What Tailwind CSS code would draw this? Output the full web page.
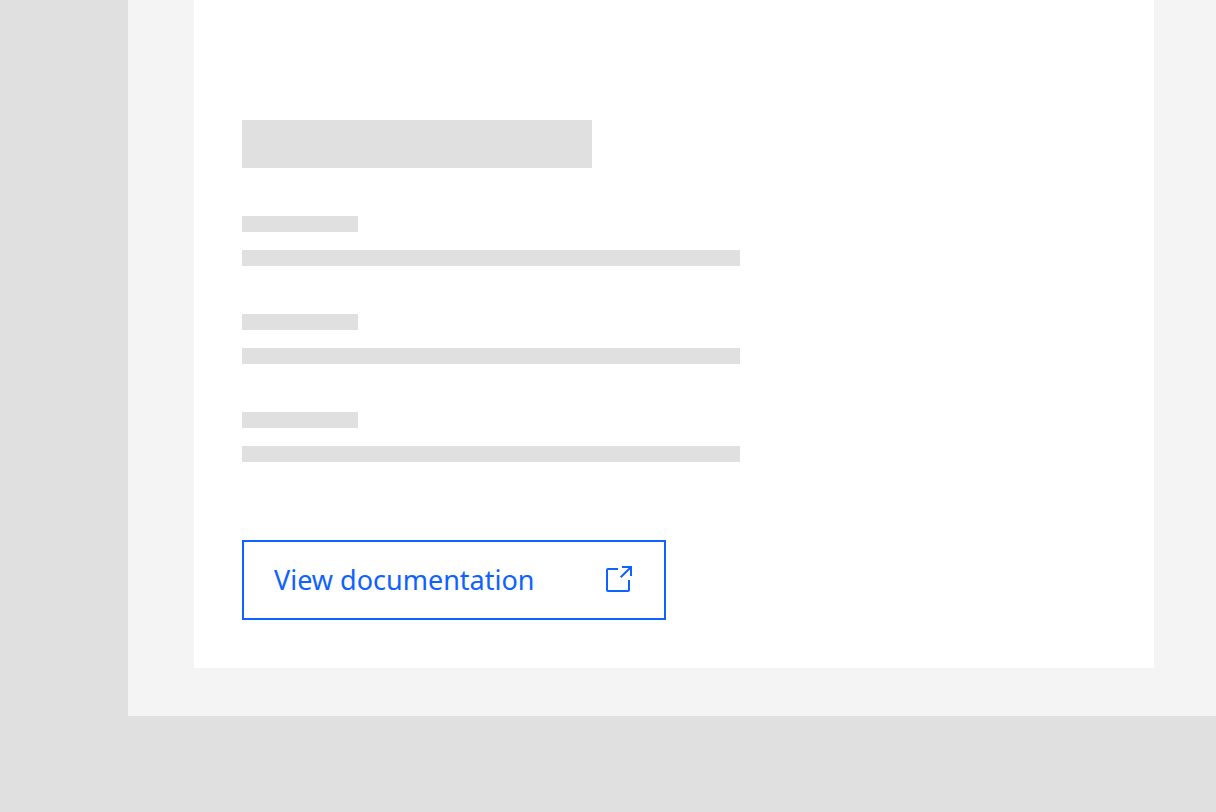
<!DOCTYPE html>
<html lang="en">
<head>
<meta charset="utf-8">
<meta name="viewport" content="width=device-width, initial-scale=1">
<title>Documentation</title>
<script src="https://cdn.jsdelivr.net/npm/@tailwindcss/browser@4"></script>
</head>
<body class="min-h-screen bg-[#e0e0e0] pl-32 pb-24">
<div class="bg-[#f4f4f4] pl-[66px] pr-[62px] pb-12">
<main class="bg-white px-12 pt-30 pb-12">
<div class="h-12 w-full max-w-[350px] bg-[#e0e0e0]"></div>
<div class="mt-12 flex max-w-[498px] flex-col gap-12">
<div class="flex flex-col gap-[18px]"><div class="h-4 w-29 bg-[#e0e0e0]"></div><div class="h-4 bg-[#e0e0e0]"></div></div>
<div class="flex flex-col gap-[18px]"><div class="h-4 w-29 bg-[#e0e0e0]"></div><div class="h-4 bg-[#e0e0e0]"></div></div>
<div class="flex flex-col gap-[18px]"><div class="h-4 w-29 bg-[#e0e0e0]"></div><div class="h-4 bg-[#e0e0e0]"></div></div>
</div>
<a href="#documentation" class="mt-[78px] flex h-20 w-full max-w-[424px] items-center justify-between border-2 border-[#0f62fe] px-[30px] font-['Noto_Sans','Open_Sans',sans-serif] text-[27px] text-[#0f62fe]">
<span>View documentation</span>
<svg class="size-8" viewBox="0 0 32 32" fill="currentColor" aria-hidden="true"><path d="M26 28H6a2 2 0 0 1-2-2V6a2 2 0 0 1 2-2h10v2H6v20h20V16h2v10a2 2 0 0 1-2 2Z"/><path d="M20 2v2h6.6L18 12.6l1.4 1.4L28 5.4V12h2V2Z"/></svg>
</a>
</main>
</div>
</body>
</html>
